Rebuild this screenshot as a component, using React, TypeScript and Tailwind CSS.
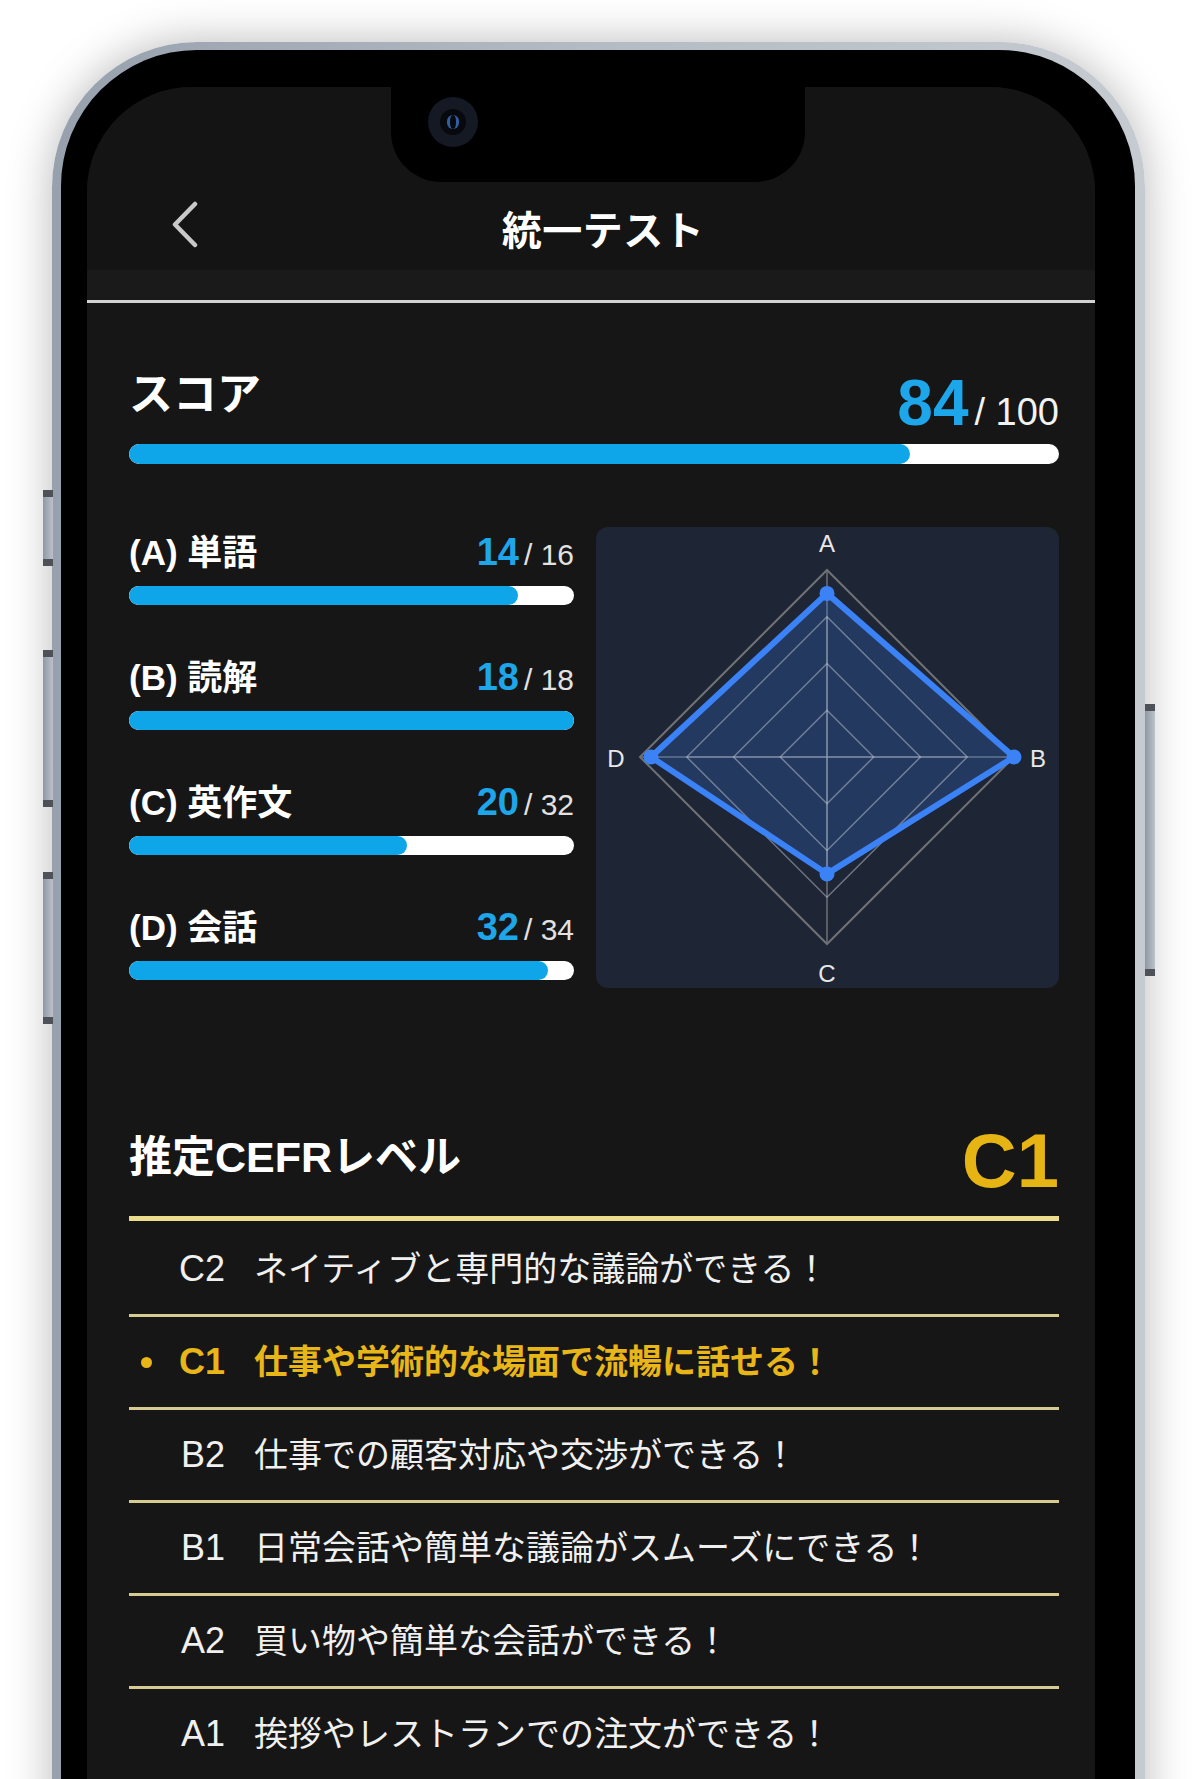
import React from "react";

const subs = [
  { key: "A", label: "単語", score: 14, max: 16 },
  { key: "B", label: "読解", score: 18, max: 18 },
  { key: "C", label: "英作文", score: 20, max: 32 },
  { key: "D", label: "会話", score: 32, max: 34 },
];

const levels = [
  { code: "C2", text: "ネイティブと専門的な議論ができる！" },
  { code: "C1", text: "仕事や学術的な場面で流暢に話せる！", current: true },
  { code: "B2", text: "仕事での顧客対応や交渉ができる！" },
  { code: "B1", text: "日常会話や簡単な議論がスムーズにできる！" },
  { code: "A2", text: "買い物や簡単な会話ができる！" },
  { code: "A1", text: "挨拶やレストランでの注文ができる！" },
];

const font = "font-['Liberation_Sans','Noto_Sans_CJK_JP',sans-serif]";

function Bar({ pct, h }: { pct: number; h: string }) {
  return (
    <div className={`w-full ${h} rounded-full bg-white overflow-hidden`}>
      <div className="h-full rounded-full bg-[#0ea5e9]" style={{ width: `${pct}%` }} />
    </div>
  );
}

function Radar() {
  const cx = 231;
  const cy = 230;
  const R = 187;
  const dirs = [
    [0, -1],
    [1, 0],
    [0, 1],
    [-1, 0],
  ];
  const ratios = subs.map((s) => s.score / s.max);
  const pts = dirs.map(([dx, dy], i) => [cx + dx * R * ratios[i], cy + dy * R * ratios[i]]);
  const ring = (r: number) => dirs.map(([dx, dy]) => `${cx + dx * r},${cy + dy * r}`).join(" ");
  const labels = [
    { t: "A", x: 231, y: 16 },
    { t: "B", x: 442, y: 231 },
    { t: "C", x: 231, y: 446 },
    { t: "D", x: 20, y: 231 },
  ];
  return (
    <svg width="463" height="461" viewBox="0 0 463 461">
      <polygon points={ring(R)} fill="none" stroke="#6f7175" strokeWidth="2" />
      <line x1={cx} y1={cy - R} x2={cx} y2={cy + R} stroke="#6f7175" strokeWidth="1.5" />
      <line x1={cx - R} y1={cy} x2={cx + R} y2={cy} stroke="#6f7175" strokeWidth="1.5" />
      <polygon
        points={pts.map((p) => p.join(",")).join(" ")}
        fill="rgba(59,130,246,0.22)"
        stroke="none"
      />
      {[0.25, 0.5, 0.75].map((k) => (
        <polygon key={k} points={ring(R * k)} fill="none" stroke="rgba(190,198,212,0.5)" strokeWidth="1.5" />
      ))}
      <line x1={cx} y1={cy - R * 0.75} x2={cx} y2={cy + R * 0.6} stroke="rgba(190,198,212,0.45)" strokeWidth="1.2" />
      <line x1={cx - R * 0.75} y1={cy} x2={cx + R * 0.75} y2={cy} stroke="rgba(190,198,212,0.45)" strokeWidth="1.2" />
      <polygon
        points={pts.map((p) => p.join(",")).join(" ")}
        fill="none"
        stroke="#3b82f6"
        strokeWidth="6"
        strokeLinejoin="round"
      />
      {pts.map((p, i) => (
        <circle key={i} cx={p[0]} cy={p[1]} r="7.5" fill="#3b82f6" />
      ))}
      {labels.map((l) => (
        <text
          key={l.t}
          x={l.x}
          y={l.y}
          fill="#e8e8e8"
          fontSize="24"
          fontFamily="Liberation Sans, sans-serif"
          textAnchor="middle"
          dominantBaseline="central"
        >
          {l.t}
        </text>
      ))}
    </svg>
  );
}

function SideButton({ cls }: { cls: string }) {
  return (
    <div
      className={`absolute w-[10px] border-y-[7px] border-[#4e5258] bg-gradient-to-r from-[#8f98a4] to-[#bcc2ca] ${cls}`}
    />
  );
}

export default function App() {
  return (
    <div className={`w-[1197px] h-[1779px] overflow-hidden bg-white ${font}`}>
      <div className="relative ml-[52px] mt-[42px] w-[1093px]">
        <SideButton cls="-left-[9px] top-[448px] h-[76px]" />
        <SideButton cls="-left-[9px] top-[608px] h-[157px]" />
        <SideButton cls="-left-[9px] top-[830px] h-[152px]" />
        <SideButton cls="-right-[10px] top-[662px] h-[272px]" />

        <div className="h-[1800px] rounded-t-[145px] bg-gradient-to-r from-[#97a1ad] via-[#b4bbc4] to-[#c6cbd1] pl-[9px] pr-[10px] pt-[8px] shadow-[0_0_45px_rgba(0,0,0,0.28)]">
          <div className="h-full rounded-t-[136px] bg-black pl-[26px] pr-[40px] pt-[37px]">
            <div className="relative h-full rounded-t-[105px] bg-[#161616] overflow-hidden">
              {/* notch */}
              <div className="absolute left-[304px] top-0 w-[414px] h-[95px] bg-black rounded-b-[50px]">
                <div className="absolute left-[37px] top-[10px] w-[50px] h-[50px] rounded-full bg-[#141924] flex items-center justify-center">
                  <div className="w-[26px] h-[26px] rounded-full bg-[#07090e] flex items-center justify-center">
                    <div className="w-[12px] h-[14px] rounded-full border-x-[3px] border-y-0 border-[#2f5f9e]" />
                  </div>
                </div>
              </div>

              {/* nav */}
              <div className="h-[183px] bg-[#141414] pt-[114px]">
                <div className="grid grid-cols-[1fr_auto_1fr] items-center h-[48px] pl-[84px] pr-[60px]">
                  <svg width="28" height="48" viewBox="0 0 28 48" className="mb-[12px]">
                    <polyline
                      points="24,3 4,23.5 24,44"
                      fill="none"
                      stroke="#c9c9c9"
                      strokeWidth="4.5"
                      strokeLinecap="round"
                      strokeLinejoin="round"
                    />
                  </svg>
                  <h1 className="text-[40px] leading-none font-bold text-white tracking-[0.5px]">統一テスト</h1>
                  <div />
                </div>
              </div>
              <div className="h-[30px] bg-[#1a1a1a]" />
              <div className="h-[3px] bg-[#d2d2d2]" />

              <div className="pl-[42px] pr-[36px]">
                {/* score */}
                <div className="pt-[70px] flex items-start justify-between">
                  <span className="text-[44px] leading-none font-bold text-white">スコア</span>
                  <div className="flex items-baseline -mt-[2px]">
                    <span className="text-[64px] leading-none font-bold text-[#1ea6ea]">84</span>
                    <span className="text-[38px] leading-none text-[#f2f2f2] ml-[6px]">/ 100</span>
                  </div>
                </div>
                <div className="mt-[9px]">
                  <Bar pct={84} h="h-[20px]" />
                </div>

                {/* breakdown */}
                <div className="mt-[63px] flex gap-[22px]">
                  <div className="w-[445px] pt-[6px] flex flex-col gap-[53px]">
                    {subs.map((s) => (
                      <div key={s.key}>
                        <div className="h-[40px] flex items-baseline justify-between">
                          <span className="text-[35px] leading-none font-bold text-white">
                            ({s.key}) {s.label}
                          </span>
                          <span className="flex items-baseline">
                            <span className="text-[38px] leading-none font-bold text-[#1ea6ea]">{s.score}</span>
                            <span className="text-[30px] leading-none text-[#e2e2e2] ml-[5px]">/ {s.max}</span>
                          </span>
                        </div>
                        <div className="mt-[13px]">
                          <Bar pct={(s.score / s.max) * 100} h="h-[19px]" />
                        </div>
                      </div>
                    ))}
                  </div>
                  <div className="w-[463px] h-[461px] rounded-[12px] bg-[#1e2535]">
                    <Radar />
                  </div>
                </div>

                {/* CEFR */}
                <div className="mt-[135px] h-[76px] flex items-center justify-between">
                  <span className="text-[43px] leading-none font-bold text-white mb-[8px]">推定CEFRレベル</span>
                  <span className="text-[76px] leading-none font-bold text-[#e6b514]">C1</span>
                </div>
                <div className="mt-[17px] h-[5px] bg-[#eadc8a]" />
                <div className="h-[3px]" />
                {levels.map((l) => (
                  <div
                    key={l.code}
                    className={`h-[93px] border-b-[3px] border-[#d6cb90] flex items-center ${
                      l.current ? "text-[#e8b619] font-bold" : "text-[#f0f0f0]"
                    }`}
                  >
                    <div className="w-[96px] flex items-center justify-between">
                      {l.current ? (
                        <span className="ml-[12px] w-[11px] h-[11px] rounded-full bg-[#e8b619]" />
                      ) : (
                        <span />
                      )}
                      <span className="text-[36px] leading-none">{l.code}</span>
                    </div>
                    <span className="ml-[29px] text-[34px] leading-none">{l.text}</span>
                  </div>
                ))}
              </div>
            </div>
          </div>
        </div>
      </div>
    </div>
  );
}
